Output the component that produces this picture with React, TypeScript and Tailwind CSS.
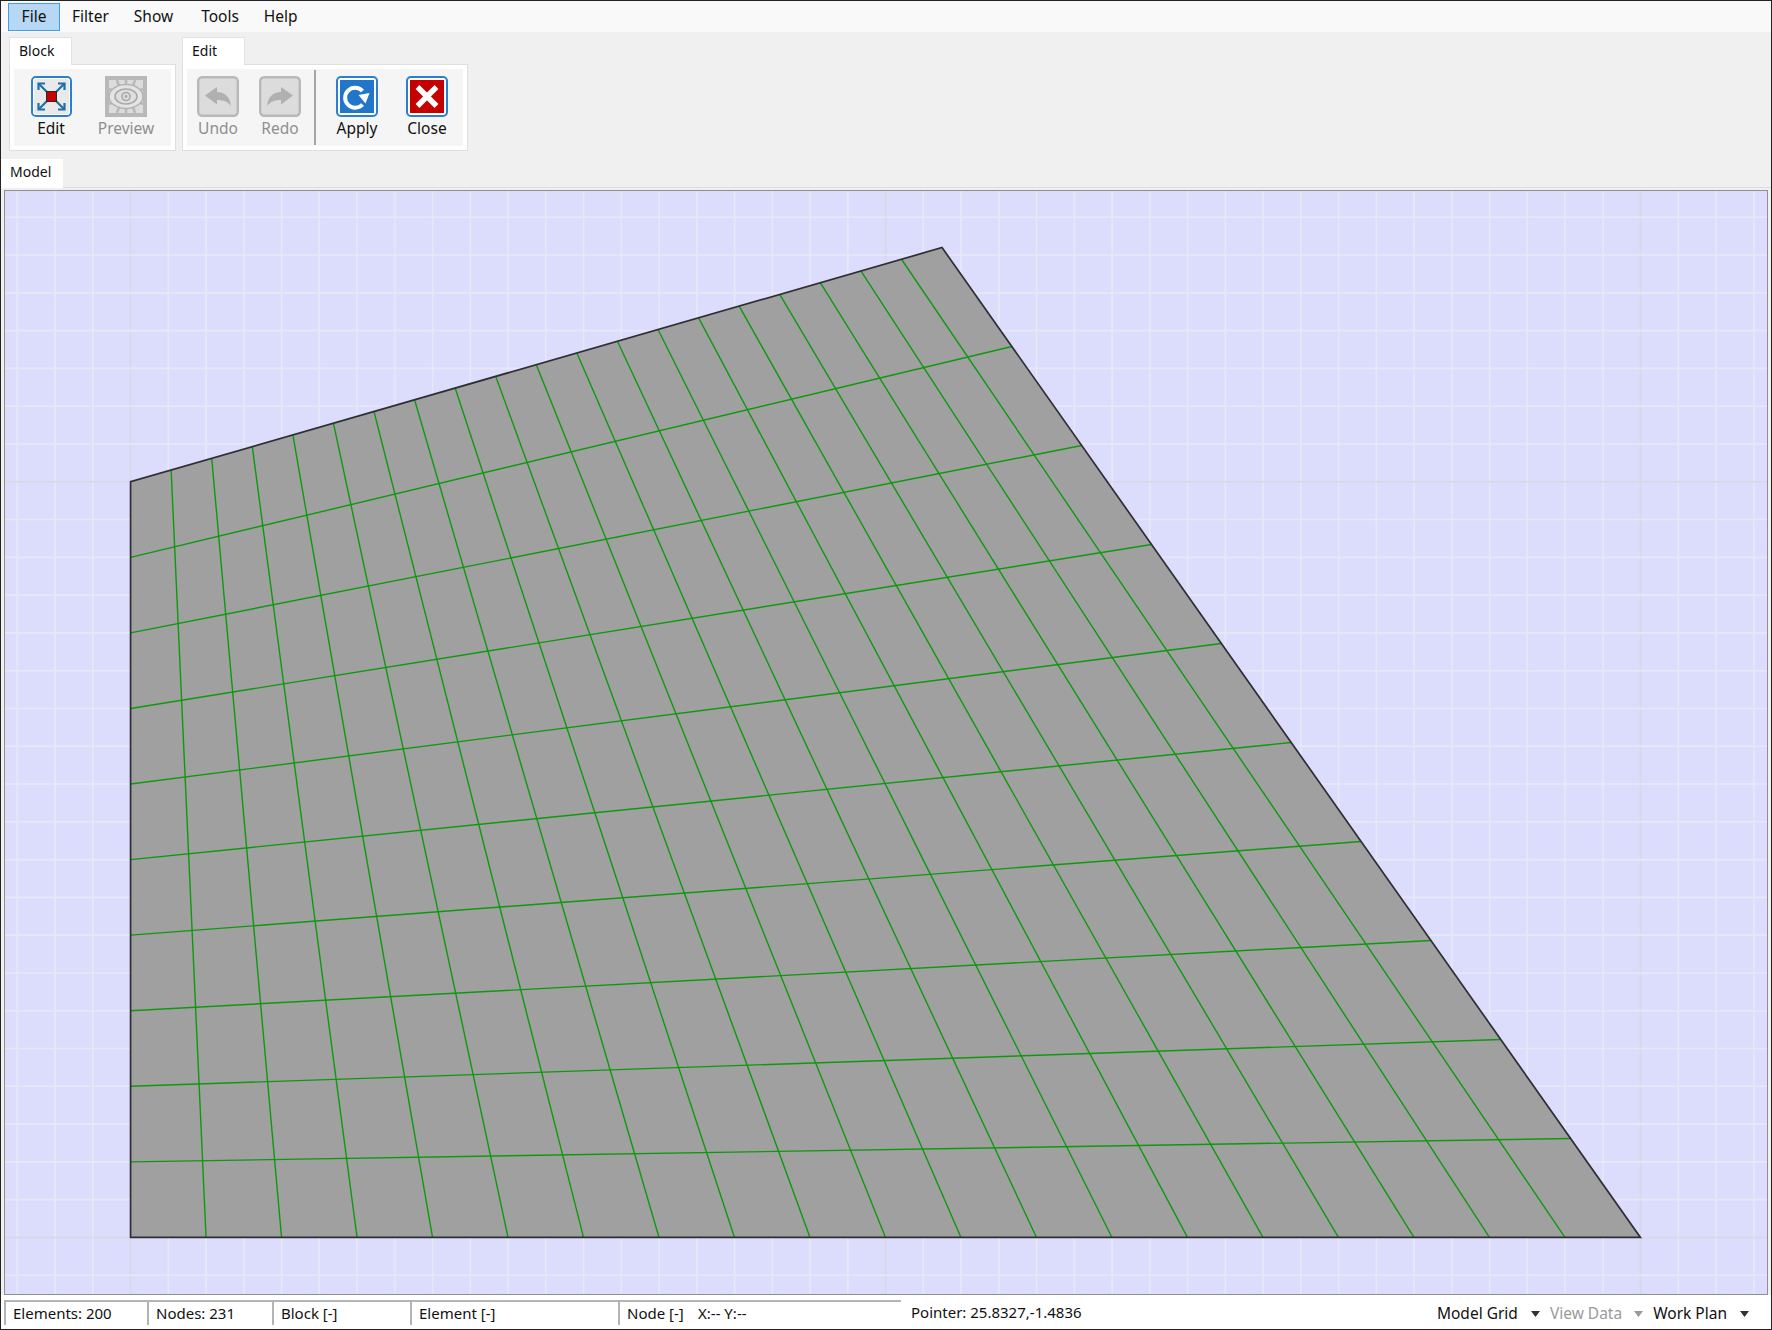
import React from "react";

const CANVAS = { x: 5.5, y: 191.5, w: 1761, h: 1102 };
const A = [131, 1237];
const B = [1640, 1237];
const C = [942, 248];
const D = [131, 482];

function mesh(u: number, v: number) {
  // u runs left to right, v runs bottom to top
  const bx = A[0] + (B[0] - A[0]) * u;
  const by = A[1] + (B[1] - A[1]) * u;
  const tx = D[0] + (C[0] - D[0]) * u;
  const ty = D[1] + (C[1] - D[1]) * u;
  return [bx + (tx - bx) * v, by + (ty - by) * v];
}

function range(from: number, to: number) {
  const out: number[] = [];
  for (let i = from; i <= to; i++) out.push(i);
  return out;
}

function ModelCanvas() {
  const dx = 37.73;
  const dy = 37.75;
  return (
    <svg className="block w-full h-full" viewBox={`${CANVAS.x} ${CANVAS.y} ${CANVAS.w} ${CANVAS.h}`} preserveAspectRatio="none">
      <rect x={CANVAS.x} y={CANVAS.y} width={CANVAS.w} height={CANVAS.h} fill="#dcdcfd" />
      {range(-3, 43).map((k) => (
        <line key={"v" + k} x1={131 + k * dx} x2={131 + k * dx} y1={CANVAS.y} y2={CANVAS.y + CANVAS.h} stroke={k % 20 === 0 ? "#d8d8e4" : "#e8e8f5"} strokeWidth={1.6} />
      ))}
      {range(-7, 21).map((k) => (
        <line key={"h" + k} x1={CANVAS.x} x2={CANVAS.x + CANVAS.w} y1={482 + k * dy} y2={482 + k * dy} stroke={k % 20 === 0 ? "#d8d8e4" : "#e8e8f5"} strokeWidth={1.6} />
      ))}
      <polygon points={[A, B, C, D].map((p) => p.join(",")).join(" ")} fill="#a0a0a0" />
      {range(1, 19).map((i) => {
        const p = mesh(i / 20, 0);
        const q = mesh(i / 20, 1);
        return <line key={"mu" + i} x1={p[0]} y1={p[1]} x2={q[0]} y2={q[1]} stroke="#0f980f" strokeWidth={1.4} />;
      })}
      {range(1, 9).map((j) => {
        const p = mesh(0, j / 10);
        const q = mesh(1, j / 10);
        return <line key={"mv" + j} x1={p[0]} y1={p[1]} x2={q[0]} y2={q[1]} stroke="#0f980f" strokeWidth={1.4} />;
      })}
      <polygon points={[A, B, C, D].map((p) => p.join(",")).join(" ")} fill="none" stroke="#2e2e34" strokeWidth={1.7} />
    </svg>
  );
}

function IconEdit() {
  return (
    <svg width="41" height="41" viewBox="0 0 41 41">
      <rect x="1" y="1" width="39" height="39" rx="4" fill="#e9e9e9" stroke="#2b7fd0" strokeWidth="2" />
      <rect x="2.5" y="2.5" width="36" height="36" rx="2" fill="none" stroke="#ffffff" strokeWidth="1" />
      <g stroke="#1b70a8" strokeWidth="2.2" fill="none">
        <path d="M16 16 L8 8" />
        <path d="M25 16 L33 8" />
        <path d="M16 25 L8 33" />
        <path d="M25 25 L33 33" />
        <path d="M7.5 14 V7.5 H14" />
        <path d="M27 7.5 H33.5 V14" />
        <path d="M7.5 27 V33.5 H14" />
        <path d="M27 33.5 H33.5 V27" />
      </g>
      <rect x="15.5" y="15.5" width="10" height="10" fill="#c90000" stroke="#2a2a2a" strokeWidth="1" />
    </svg>
  );
}

function IconPreview() {
  return (
    <svg width="42" height="41" viewBox="0 0 42 41">
      <rect x="0" y="0" width="42" height="41" fill="#b8b8b8" />
      <rect x="4" y="4" width="34" height="33" fill="#dcdcdc" />
      <g stroke="#b8b8b8" strokeWidth="2.5">
        <path d="M12 4 L14 10" />
        <path d="M30 4 L28 10" />
        <path d="M21 4 V9" />
        <path d="M12 37 L14 31" />
        <path d="M30 37 L28 31" />
        <path d="M21 37 V32" />
        <path d="M4 13 L9 15" />
        <path d="M38 13 L33 15" />
        <path d="M4 28 L9 26" />
        <path d="M38 28 L33 26" />
      </g>
      <ellipse cx="21" cy="20.5" rx="17" ry="12" fill="#e4e4e4" stroke="#b4b4b4" strokeWidth="1.5" />
      <ellipse cx="21" cy="20.5" rx="11" ry="7.5" fill="#dedede" stroke="#a8a8a8" strokeWidth="1.6" />
      <circle cx="21" cy="20.5" r="4" fill="none" stroke="#a8a8a8" strokeWidth="1.6" />
      <circle cx="21" cy="20.5" r="1.4" fill="#a8a8a8" />
    </svg>
  );
}

function IconHistory({ flip }: { flip?: boolean }) {
  return (
    <svg width="42" height="41" viewBox="0 0 42 41">
      <rect x="1.2" y="1.2" width="39.6" height="38.6" rx="4" fill="#dcdcdc" stroke="#b8b8b8" strokeWidth="2.4" />
      <path
        transform={flip ? "matrix(-1 0 0 1 42 0)" : undefined}
        d="M8 19.5 L20 11 V16 C28 16 33 21 34 30 C31 26 27 24 20 24 V28.5 Z"
        fill="#b0b0b0"
      />
    </svg>
  );
}

function IconApply() {
  return (
    <svg width="42" height="41" viewBox="0 0 42 41">
      <rect x="1" y="1" width="40" height="39" rx="4" fill="#ffffff" stroke="#2b7fd0" strokeWidth="2" />
      <rect x="4" y="4" width="34" height="33" fill="#2176c9" />
      <path d="M26.5 28.5 A10 10 0 1 1 26.5 15" fill="none" stroke="#ffffff" strokeWidth="4" />
      <path d="M22.5 19 L33.5 17 L29.5 27.5 Z" fill="#ffffff" />
    </svg>
  );
}

function IconClose() {
  return (
    <svg width="42" height="41" viewBox="0 0 42 41">
      <rect x="1" y="1" width="40" height="39" rx="4" fill="#ffffff" stroke="#2b7fd0" strokeWidth="2" />
      <rect x="4" y="4" width="34" height="33" fill="#c40000" />
      <path d="M11.5 11 L30.5 30 M30.5 11 L11.5 30" stroke="#ffffff" strokeWidth="5.4" />
    </svg>
  );
}

function ToolButton({ label, disabled, children }: { label: string; disabled?: boolean; children: React.ReactNode }) {
  return (
    <div className="flex flex-col items-center w-[42px]">
      {children}
      <span className={`mt-[1px] text-[15.5px] leading-[20px] whitespace-nowrap ${disabled ? "text-[#8f8f8f]" : "text-[#111]"}`}>{label}</span>
    </div>
  );
}

function Group({ title, width, children }: { title: string; width: string; children: React.ReactNode }) {
  return (
    <div className={`flex flex-col ${width}`}>
      <div className="w-[63px] h-[28px] -mb-[1px] z-10 bg-white border border-b-0 border-[#e3e3e3] pl-[9px] text-[14px] leading-[25px] text-[#111]">{title}</div>
      <div className="h-[87px] bg-white border border-[#dedede] p-[4px]">
        <div className="h-full bg-[#f5f5f5] flex pt-[7px]">{children}</div>
      </div>
    </div>
  );
}

function Cell({ width, children }: { width: string; children: React.ReactNode }) {
  return (
    <div className={`${width} shrink-0 h-[25px] mt-[5px] border-t-2 border-l-2 border-[#b4b4b4] pl-[7px] text-[15px] leading-[23px] text-[#111] whitespace-nowrap`}>{children}</div>
  );
}

function Caret({ light, wide }: { light?: boolean; wide?: boolean }) {
  return (
    <svg width="9" height="6" viewBox="0 0 9 6" className={wide ? "ml-[13px]" : "ml-[12px]"}>
      <path d="M0 0 H9 L4.5 6 Z" fill={light ? "#9a9a9a" : "#333"} />
    </svg>
  );
}

export default function App() {
  return (
    <div className="w-[1772px] h-[1330px] overflow-hidden flex flex-col bg-[#f0f0f0] border border-[#222] font-['Noto_Sans',sans-serif]">
      <div className="h-[31px] shrink-0 bg-[#f9f9f9] flex items-center pl-[7px] text-[15.5px] text-[#111]">
        <div className="w-[52px] h-[28px] bg-[#b6d8f4] border border-[#3f9ee6] flex items-center justify-center">File</div>
        <div className="ml-[12px]">Filter</div>
        <div className="ml-[25px]">Show</div>
        <div className="ml-[28px]">Tools</div>
        <div className="ml-[25px]">Help</div>
      </div>

      <div className="shrink-0 flex gap-[6px] pl-[8px] pt-[5px]">
        <Group title="Block" width="w-[167px]">
          <div className="flex gap-[33px] pl-[16px]">
            <ToolButton label="Edit"><IconEdit /></ToolButton>
            <ToolButton label="Preview" disabled><IconPreview /></ToolButton>
          </div>
        </Group>
        <Group title="Edit" width="w-[286px]">
          <div className="flex pl-[10px]">
            <ToolButton label="Undo" disabled><IconHistory /></ToolButton>
            <div className="ml-[20px]">
              <ToolButton label="Redo" disabled><IconHistory flip /></ToolButton>
            </div>
            <div className="ml-[13px] mt-[-6px] w-[2px] h-[75px] bg-[#a6a6a6]" />
            <div className="ml-[20px]">
              <ToolButton label="Apply"><IconApply /></ToolButton>
            </div>
            <div className="ml-[28px]">
              <ToolButton label="Close"><IconClose /></ToolButton>
            </div>
          </div>
        </Group>
      </div>

      <div className="shrink-0 h-[29px] mt-[8px] border-b border-[#dddddd]">
        <div className="w-[62px] h-[29px] bg-white pl-[9px] text-[14px] leading-[26px] text-[#111]">Model</div>
      </div>

      <div className="flex-1 min-h-0 mt-[2px] ml-[3px] mr-[3px] border-[1.5px] border-[#8f8f8f]">
        <ModelCanvas />
      </div>

      <div className="h-[34px] shrink-0 bg-white flex pl-[3px]">
        <Cell width="w-[143px]">Elements: 200</Cell>
        <Cell width="w-[125px]">Nodes: 231</Cell>
        <Cell width="w-[138px]">Block [-]</Cell>
        <Cell width="w-[208px]">Element [-]</Cell>
        <Cell width="w-[283px]">
          <span className="inline-block w-[63px]">Node [-]</span>
          <span className="ml-[8px]">X:-- Y:--</span>
        </Cell>
        <div className="mt-[5px] pl-[10px] text-[15px] leading-[25px] text-[#111] whitespace-nowrap">Pointer: 25.8327,-1.4836</div>
        <div className="ml-auto pr-[22px] mt-[6px] flex items-center text-[15.5px] text-[#111] h-[25px]">
          <span>Model Grid</span>
          <Caret wide />
          <span className="ml-[10px] text-[#9a9a9a]">View Data</span>
          <Caret light />
          <span className="ml-[10px]">Work Plan</span>
          <Caret wide />
        </div>
      </div>
    </div>
  );
}
